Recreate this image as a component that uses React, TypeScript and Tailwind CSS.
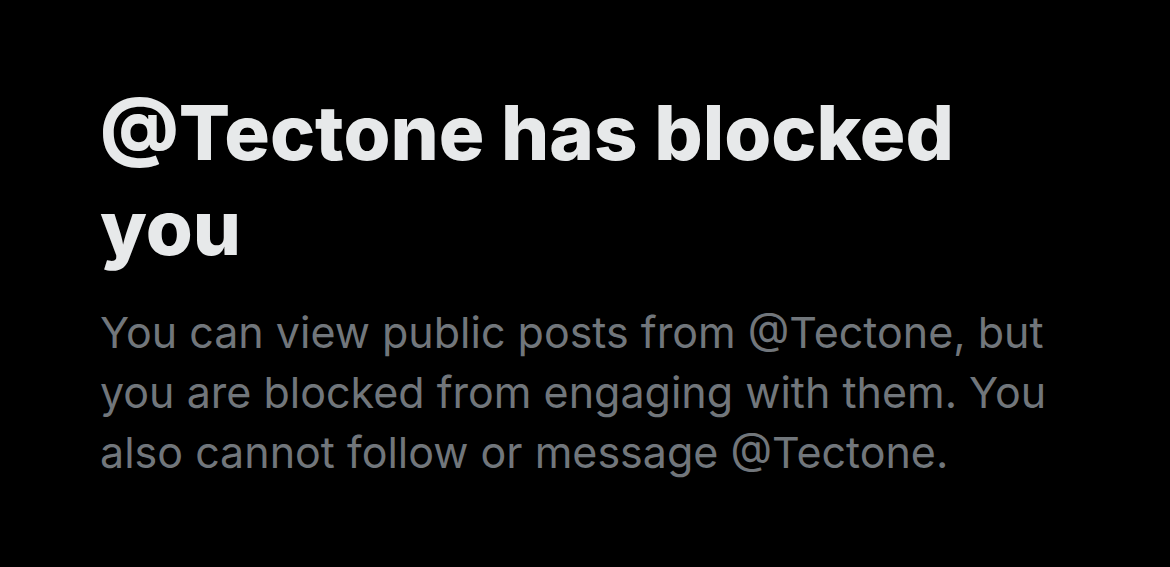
export default function App() {
  return (
    <div
      className="min-h-[567px] w-full bg-black px-[100px] pt-[85px]"
      style={{ fontFamily: "Inter, 'Noto Sans', sans-serif" }}
    >
      <h1 className="text-[76px] font-extrabold leading-[95px] text-[#e7e9ea]">
        @Tectone has blocked you
      </h1>
      <p className="mt-[27px] text-[43px] leading-[60px] text-[#71767b]">
        You can view public posts from @Tectone, but you are blocked from
        engaging with them. You also cannot follow or message @Tectone.
      </p>
    </div>
  );
}
